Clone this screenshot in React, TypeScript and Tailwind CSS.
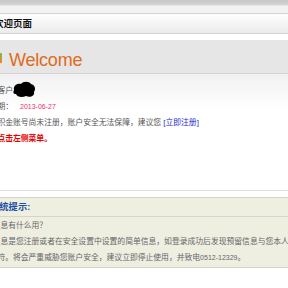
import React from "react";

function Blob() {
  return (
    <svg width="24" height="17" viewBox="0 0 24 17" className="inline-block align-middle -ml-[1px] -mt-[3px]">
      <path
        d="M2 9 C1 5 5 2 9 3 C11 0 17 0 19 3 C23 4 24 8 22 11 C23 15 18 17 14 15 C10 17 5 16 4 13 C1 13 1 11 2 9 Z"
        fill="#000"
      />
    </svg>
  );
}

function WelcomeIcon() {
  return (
    <svg width="15" height="12" viewBox="0 0 15 12" className="-ml-[12px] mr-[6px] mt-[1px] shrink-0">
      <rect x="1" y="1" width="13" height="10" rx="1" fill="#8cb34a" />
      <rect x="3" y="3" width="9" height="6" fill="#f4e7c0" />
      <rect x="10" y="6" width="4" height="5" fill="#e9872a" />
    </svg>
  );
}

export default function App() {
  return (
    <div className="w-[288px] h-[288px] overflow-hidden bg-white font-['Liberation_Sans','Noto_Sans_CJK_SC',sans-serif]">
      {/* browser-ish top strip */}
      <div className="h-[5px] bg-gradient-to-b from-[#c6c6c6] to-[#d4d4d4]" />
      <div className="h-[8px] bg-[#f2f2f2] border-t border-[#e6e6e6]" />

      {/* page title */}
      <div className="h-[21px] border-y border-[#d3d3d3] bg-gradient-to-b from-[#fefefe] to-[#ebebeb] flex items-center">
        <span className="-ml-[6px] text-[9.5px] leading-[12px] font-bold text-[#111] whitespace-nowrap">欢迎页面</span>
      </div>
      <div className="h-[6px]" />

      {/* welcome bar */}
      <div className="h-[34px] bg-[#e6e6e6] border-b border-[#d3d3d3] flex items-start pt-[11px]">
        <WelcomeIcon />
        <span className="text-[18px] leading-[18px] text-[#e06b1c] tracking-[-0.2px]">Welcome</span>
      </div>

      {/* content */}
      <div className="h-[116px] bg-gradient-to-b from-[#f1f1f1] to-white to-[30%] pt-[9px] text-[7.8px] leading-[16px] text-[#555]">
        <div className="-ml-[26px] whitespace-nowrap flex items-center h-[16px]">
          尊敬的客户<Blob />
        </div>
        <div className="-ml-[26px] whitespace-nowrap">
          登录日期：<span className="ml-[7px] text-[7px] text-[#f0306a]">2013-06-27</span>
        </div>
        <div className="-ml-[26px] whitespace-nowrap">
          您的公积金账号尚未注册，账户安全无法保障，建议您{" "}
          <a className="text-[#2424c8]">[立即注册]</a>
        </div>
        <div className="-ml-[26px] whitespace-nowrap font-bold text-[#e80000]">操作请点击左侧菜单。</div>
      </div>

      <div className="h-px bg-[#dcdcdc]" />
      <div className="h-[6px]" />

      {/* system tips */}
      <div className="border-y border-[#d4d4c4] bg-[#efefe1]">
        <div className="h-[19px] border-b border-[#d6d6c6] flex items-center">
          <span className="-ml-[10px] text-[9.3px] leading-[12px] font-bold text-[#1e4fa3] whitespace-nowrap">系统提示:</span>
        </div>
        <div className="pt-[1px] pb-[1px] text-[7.8px] leading-[16px] text-[#666]">
          <div className="-ml-[23px] whitespace-nowrap">预留信息有什么用？</div>
          <div className="-ml-[23px] whitespace-nowrap">
            预留信息是您注册或者在安全设置中设置的简单信息，如登录成功后发现预留信息与您本人设置的不一致
          </div>
          <div className="-ml-[26px] whitespace-nowrap">
            信息不符。将会严重威胁您账户安全，建议立即停止使用，并致电<span className="text-[7px]">0512-12329</span>。
          </div>
        </div>
      </div>
    </div>
  );
}
